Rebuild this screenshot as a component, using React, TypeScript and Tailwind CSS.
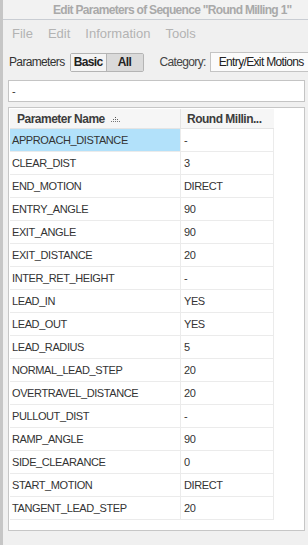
import React from "react";

const rows: [string, string][] = [
  ["APPROACH_DISTANCE", "-"],
  ["CLEAR_DIST", "3"],
  ["END_MOTION", "DIRECT"],
  ["ENTRY_ANGLE", "90"],
  ["EXIT_ANGLE", "90"],
  ["EXIT_DISTANCE", "20"],
  ["INTER_RET_HEIGHT", "-"],
  ["LEAD_IN", "YES"],
  ["LEAD_OUT", "YES"],
  ["LEAD_RADIUS", "5"],
  ["NORMAL_LEAD_STEP", "20"],
  ["OVERTRAVEL_DISTANCE", "20"],
  ["PULLOUT_DIST", "-"],
  ["RAMP_ANGLE", "90"],
  ["SIDE_CLEARANCE", "0"],
  ["START_MOTION", "DIRECT"],
  ["TANGENT_LEAD_STEP", "20"],
];

function SortDots() {
  return (
    <svg width="9" height="6" viewBox="0 0 9 6" className="ml-[6px] mt-[3px]">
      <rect x="4" y="0" width="1" height="1" fill="#555" />
      <rect x="2" y="2" width="1" height="1" fill="#666" />
      <rect x="4" y="2" width="1" height="1" fill="#666" />
      <rect x="6" y="2" width="1" height="1" fill="#666" />
      <rect x="0" y="4" width="1" height="1" fill="#777" />
      <rect x="2" y="4" width="1" height="1" fill="#777" />
      <rect x="4" y="4" width="1" height="1" fill="#777" />
      <rect x="6" y="4" width="1" height="1" fill="#777" />
      <rect x="8" y="4" width="1" height="1" fill="#777" />
    </svg>
  );
}

export default function App() {
  return (
    <div
      className="w-[308px] h-[545px] flex bg-[#f0f0f0] overflow-hidden text-[11px] tracking-[-0.4px] text-[#333]"
      style={{ fontFamily: '"Liberation Sans", Arial, sans-serif' }}
    >
      <div className="w-[3px] shrink-0 bg-[#c6c6c6]" />
      <div className="flex-1 flex flex-col min-w-0">
        {/* title */}
        <div className="h-[20px] shrink-0 flex items-center pl-[50px] border-b border-[#c9cdd3] bg-[#f2f2f2] whitespace-nowrap overflow-hidden">
          <span className="font-bold text-[12px] tracking-[-0.7px] text-[#a9a9a9]">
            Edit Parameters of Sequence "Round Milling 1"
          </span>
        </div>
        {/* menu */}
        <div className="h-[28px] shrink-0 flex items-center gap-[15px] pl-[9px] text-[13px] tracking-normal text-[#b3b3b3]">
          <span>File</span>
          <span>Edit</span>
          <span>Information</span>
          <span>Tools</span>
        </div>
        {/* toolbar */}
        <div className="h-[28px] shrink-0 flex items-center pl-[6px] whitespace-nowrap text-[12px] tracking-[-0.65px]">
          <span className="text-[#333]">Parameters</span>
          <div className="ml-[5px] flex h-[19px] border border-[#b4b4b4] rounded-[2px]">
            <div className="w-[36px] flex items-center justify-center font-bold bg-[#f4f4f4] text-[#222] border-r border-[#b4b4b4]">
              Basic
            </div>
            <div className="w-[36px] flex items-center justify-center font-bold bg-[#dadada] text-[#222]">
              All
            </div>
          </div>
          <span className="ml-[16px] text-[#444]">Category:</span>
          <div className="ml-[4px] h-[20px] flex-1 flex items-center pl-[8px] bg-[#fbfbfb] border border-[#c4c4c4] border-r-0 text-[#222]">
            Entry/Exit Motions
          </div>
        </div>
        {/* value field */}
        <div className="mt-[4px] ml-[5px] mr-[3px] h-[22px] shrink-0 flex items-center pl-[3px] bg-white border border-[#c4c4c4] text-[#333]">
          -
        </div>
        {/* table */}
        <div className="mt-[5px] ml-[5px] mr-[3px] h-[424px] shrink-0 bg-white border border-[#c6c6c6] pl-[1px] pt-[1px]">
          <div className="flex h-[20px] border-b border-[#e4e4e4] bg-[#f6f6f6] w-[264px]">
            <div className="w-[171px] flex items-center pl-[7px] border-r border-[#e4e4e4] font-semibold text-[12px] tracking-[-0.5px] text-[#3c3c3c]">
              Parameter Name
              <SortDots />
            </div>
            <div className="flex-1 flex items-center pl-[6px] font-semibold text-[12px] tracking-[-0.5px] text-[#3c3c3c]">
              Round Millin...
            </div>
          </div>
          {rows.map(([name, value], i) => (
            <div key={name} className="flex h-[23px] w-[264px] border-b border-r border-[#ebebeb]">
              <div
                className={
                  "w-[171px] flex items-center pl-[2px] border-r border-[#ebebeb] text-[#333] " +
                  (i === 0 ? "bg-[#b2e1fa]" : "")
                }
              >
                {name}
              </div>
              <div className="flex-1 flex items-center pl-[3px] text-[#333]">{value}</div>
            </div>
          ))}
        </div>
      </div>
    </div>
  );
}
